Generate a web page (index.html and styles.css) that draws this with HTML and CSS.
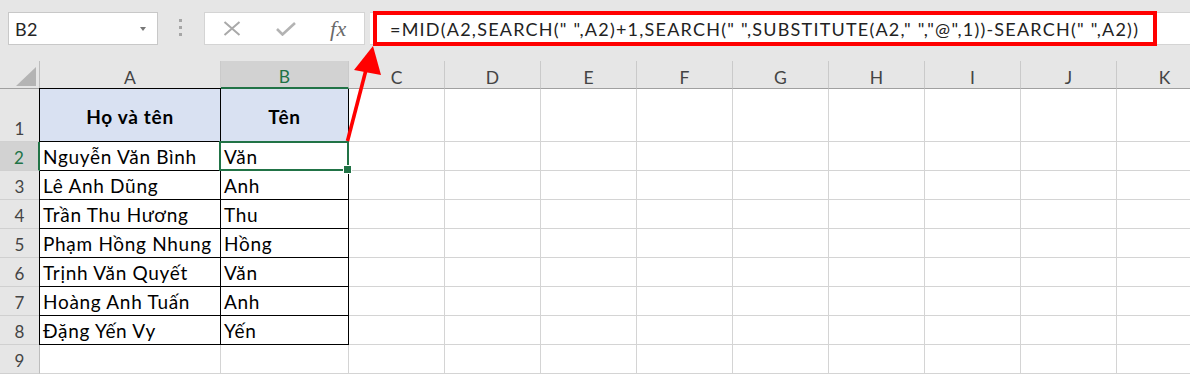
FILE: index.html
```html
<!DOCTYPE html>
<html lang="vi">
<head>
<meta charset="utf-8">
<title>Excel - MID SEARCH</title>
<link rel="stylesheet" href="styles.css">
</head>
<body>
<div class="app">
  <div class="topbar">
    <div class="namebox"><span class="name">B2</span><span class="caret"></span></div>
    <div class="grip"><i></i><i></i><i></i></div>
    <div class="fxbox">
      <svg class="ico-x" width="18" height="15" viewBox="0 0 18 15"><path d="M1.5 1 L16.5 14 M16.5 1 L1.5 14" stroke="#a9a9a9" stroke-width="2" fill="none"/></svg>
      <svg class="ico-check" width="20" height="14" viewBox="0 0 20 14"><path d="M1 7 L6.5 12.5 L19 1" stroke="#b3b3b3" stroke-width="2.6" fill="none"/></svg>
      <span class="fx">fx</span>
    </div>
    <div class="formula">
      <div class="highlight">=MID(A2,SEARCH(" ",A2)+1,SEARCH(" ",SUBSTITUTE(A2," ","@",1))-SEARCH(" ",A2))</div>
    </div>
  </div>
  <div class="sheet">
    <div class="corner"><span class="tri"></span></div>
    <div class="ch">A</div><div class="ch sel">B</div><div class="ch">C</div><div class="ch">D</div><div class="ch">E</div><div class="ch">F</div><div class="ch">G</div><div class="ch">H</div><div class="ch">I</div><div class="ch">J</div><div class="ch">K</div>

    <div class="rh">1</div>
    <div class="cell t a top head">Họ và tên</div><div class="cell t b head">Tên</div>
    <div class="cell"></div><div class="cell"></div><div class="cell"></div><div class="cell"></div><div class="cell"></div><div class="cell"></div><div class="cell"></div><div class="cell"></div><div class="cell"></div>

    <div class="rh sel">2</div>
    <div class="cell t a selrow">Nguyễn Văn Bình</div><div class="cell t b active">Văn</div>
    <div class="cell"></div><div class="cell"></div><div class="cell"></div><div class="cell"></div><div class="cell"></div><div class="cell"></div><div class="cell"></div><div class="cell"></div><div class="cell"></div>

    <div class="rh">3</div>
    <div class="cell t a">Lê Anh Dũng</div><div class="cell t b">Anh</div>
    <div class="cell"></div><div class="cell"></div><div class="cell"></div><div class="cell"></div><div class="cell"></div><div class="cell"></div><div class="cell"></div><div class="cell"></div><div class="cell"></div>

    <div class="rh">4</div>
    <div class="cell t a">Trần Thu Hương</div><div class="cell t b">Thu</div>
    <div class="cell"></div><div class="cell"></div><div class="cell"></div><div class="cell"></div><div class="cell"></div><div class="cell"></div><div class="cell"></div><div class="cell"></div><div class="cell"></div>

    <div class="rh">5</div>
    <div class="cell t a">Phạm Hồng Nhung</div><div class="cell t b">Hồng</div>
    <div class="cell"></div><div class="cell"></div><div class="cell"></div><div class="cell"></div><div class="cell"></div><div class="cell"></div><div class="cell"></div><div class="cell"></div><div class="cell"></div>

    <div class="rh">6</div>
    <div class="cell t a">Trịnh Văn Quyết</div><div class="cell t b">Văn</div>
    <div class="cell"></div><div class="cell"></div><div class="cell"></div><div class="cell"></div><div class="cell"></div><div class="cell"></div><div class="cell"></div><div class="cell"></div><div class="cell"></div>

    <div class="rh">7</div>
    <div class="cell t a">Hoàng Anh Tuấn</div><div class="cell t b">Anh</div>
    <div class="cell"></div><div class="cell"></div><div class="cell"></div><div class="cell"></div><div class="cell"></div><div class="cell"></div><div class="cell"></div><div class="cell"></div><div class="cell"></div>

    <div class="rh">8</div>
    <div class="cell t a">Đặng Yến Vy</div><div class="cell t b">Yến</div>
    <div class="cell"></div><div class="cell"></div><div class="cell"></div><div class="cell"></div><div class="cell"></div><div class="cell"></div><div class="cell"></div><div class="cell"></div><div class="cell"></div>

    <div class="rh">9</div>
    <div class="cell"></div><div class="cell"></div>
    <div class="cell"></div><div class="cell"></div><div class="cell"></div><div class="cell"></div><div class="cell"></div><div class="cell"></div><div class="cell"></div><div class="cell"></div><div class="cell"></div>
  </div>
  <svg class="arrow" width="1190" height="374" viewBox="0 0 1190 374">
    <line x1="347.5" y1="141" x2="367" y2="66" stroke="#f00" stroke-width="3.6"/>
    <polygon points="373,46 354,70 381,75" fill="#f00"/>
  </svg>
</div>
</body>
</html>
```
FILE: styles.css
```css
* { box-sizing: border-box; margin: 0; padding: 0; }

body {
  margin: 0;
  width: 1190px;
  height: 374px;
  overflow: hidden;
  background: #fff;
  font-family: Lato, "Liberation Sans", sans-serif;
}

.app {
  position: relative;
  width: 1190px;
  height: 374px;
  overflow: hidden;
}

/* ---------- formula bar ---------- */
.topbar {
  height: 61px;
  background: #e6e6e6;
  display: flex;
  align-items: flex-start;
  padding: 12px 0 0 8px;
}

.namebox {
  width: 150px;
  height: 33px;
  background: #fff;
  border: 1px solid #c8c8c8;
  display: flex;
  align-items: center;
  justify-content: space-between;
  padding: 1px 11px 0 6px;
  font-size: 18px;
  letter-spacing: 0.4px;
  color: #262626;
}

.caret {
  width: 0;
  height: 0;
  border-left: 3px solid transparent;
  border-right: 3px solid transparent;
  border-top: 4px solid #777;
}

.grip {
  display: flex;
  flex-direction: column;
  gap: 4px;
  margin: 7px 0 0 21px;
  width: 3px;
}

.grip i {
  display: block;
  width: 3px;
  height: 3px;
  background: #a6a6a6;
}

.fxbox {
  margin-left: 22px;
  width: 161px;
  height: 33px;
  background: #fff;
  border: 1px solid #d4d4d4;
  display: flex;
  align-items: center;
  padding-left: 18px;
  gap: 35px;
}

.fx {
  font-family: "Liberation Serif", serif;
  font-style: italic;
  font-size: 22px;
  color: #6a6a6a;
  margin-left: -1px;
  letter-spacing: 0.5px;
}

.formula {
  margin-left: 5px;
  flex: 1;
  height: 33px;
  background: #fff;
  border-top: 1px solid #d4d4d4;
  border-bottom: 1px solid #d4d4d4;
  display: flex;
  align-items: flex-start;
}

.highlight {
  margin: -2px 0 0 3px;
  width: 784px;
  height: 35px;
  border: 4px solid #f00;
  display: flex;
  align-items: center;
  padding: 1px 0 0 13px;
  font-size: 18px;
  letter-spacing: 1.22px;
  color: #222;
  white-space: nowrap;
}

/* ---------- sheet ---------- */
.sheet {
  display: grid;
  grid-template-columns: 40px 181px 128px repeat(9, 96px);
  grid-template-rows: 28px 53px repeat(8, 29px);
  overflow: hidden;
  width: 1190px;
}

.corner {
  background: #e6e6e6;
  border-right: 1px solid #bdbdbd;
  border-bottom: 1px solid #a0a0a0;
  display: flex;
  justify-content: flex-end;
  align-items: flex-end;
  padding: 0 3px 2px 0;
}

.tri {
  display: block;
  width: 20px;
  height: 19px;
  background: #b4b4b4;
  clip-path: polygon(100% 0, 100% 100%, 0 100%);
}

.ch {
  background: #e6e6e6;
  border-right: 1px solid #cacaca;
  border-bottom: 1px solid #a0a0a0;
  display: flex;
  justify-content: center;
  align-items: center;
  padding-top: 5px;
  font-size: 17.5px;
  color: #444;
}

.ch.sel {
  background: #d2d2d2;
  color: #217346;
  border-bottom: 2px solid #217346;
}

.rh {
  background: #e6e6e6;
  border-right: 1px solid #bdbdbd;
  border-bottom: 1px solid #d0d0d0;
  display: flex;
  justify-content: center;
  align-items: flex-end;
  padding-bottom: 2px;
  font-size: 17px;
  line-height: 1.2;
  color: #444;
}

.rh.sel {
  background: #d2d2d2;
  color: #217346;
  border-right: 2px solid #217346;
}

.cell {
  border-right: 1px solid #d4d4d4;
  border-bottom: 1px solid #d4d4d4;
  display: flex;
  align-items: flex-end;
  padding: 0 0 1px 3px;
  font-size: 19px;
  letter-spacing: 0.7px;
  line-height: 1.2;
  color: #000;
  white-space: nowrap;
}

.cell.t { border-color: #000; }

.cell.a { box-shadow: -1px 0 0 #000; }

.cell.a.top { box-shadow: -1px 0 0 #000, 0 -1px 0 #000, -1px -1px 0 #000; }

.cell.a.selrow { box-shadow: -1px 0 0 #217346; }

.cell.head {
  background: #d9e1f2;
  font-weight: 700;
  justify-content: center;
  align-items: center;
  padding: 4px 0 0 0;
}

.cell.active { position: relative; }

.cell.active::after {
  content: "";
  position: absolute;
  left: -2px;
  top: -1px;
  right: -1px;
  bottom: -1px;
  border: 2px solid #217346;
}

.cell.active::before {
  content: "";
  position: absolute;
  right: -4px;
  bottom: -4px;
  width: 7px;
  height: 7px;
  background: #217346;
  border: 1px solid #fff;
  z-index: 1;
}

.arrow {
  position: absolute;
  left: 0;
  top: 0;
  pointer-events: none;
}
```
